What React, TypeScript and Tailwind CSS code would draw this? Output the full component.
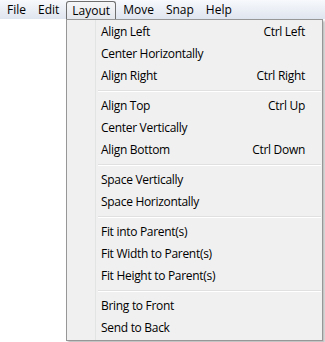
import React from "react";

type Item = { label: string; shortcut?: string };

const groups: Item[][] = [
  [
    { label: "Align Left", shortcut: "Ctrl Left" },
    { label: "Center Horizontally" },
    { label: "Align Right", shortcut: "Ctrl Right" },
  ],
  [
    { label: "Align Top", shortcut: "Ctrl Up" },
    { label: "Center Vertically" },
    { label: "Align Bottom", shortcut: "Ctrl Down" },
  ],
  [{ label: "Space Vertically" }, { label: "Space Horizontally" }],
  [
    { label: "Fit into Parent(s)" },
    { label: "Fit Width to Parent(s)" },
    { label: "Fit Height to Parent(s)" },
  ],
  [{ label: "Bring to Front" }, { label: "Send to Back" }],
];

const menus = ["File", "Edit", "Layout", "Move", "Snap", "Help"];

export default function App() {
  return (
    <div
      className="relative w-[325px] h-[342px] bg-white text-[12px] text-black"
      style={{ fontFamily: '"Open Sans", "Noto Sans", sans-serif' }}
    >
      {/* 메뉴 바 */}
      <div className="flex items-center h-[19px] pl-[1px] bg-gradient-to-b from-[#f7f9fc] to-[#dfe5ef]">
        {menus.map((m) =>
          m === "Layout" ? (
            <div
              key={m}
              className="h-[18px] mt-[1px] px-[5px] mx-[1px] flex items-center rounded-t-[3px] border border-b-0 border-[#6f6f6f] bg-gradient-to-b from-[#f5f6f7] to-[#e4e7ec]"
            >
              {m}
            </div>
          ) : (
            <div key={m} className="h-[19px] px-[6px] flex items-center">
              {m}
            </div>
          )
        )}
      </div>

      {/* 드롭다운 메뉴 */}
      <div className="absolute left-[66px] top-[19px] w-[257px] h-[322px] border border-[#979797] bg-[#f0f0f0] shadow-[2px_2px_2px_rgba(0,0,0,0.25)] pt-[1px] tracking-[-0.3px]">
        <div className="absolute left-[28px] top-0 bottom-0 w-[2px] border-l border-[#e2e3e3] bg-[#f0f0f0] border-r-white" />
        <div className="relative">
          {groups.map((g, gi) => (
            <div key={gi}>
              {gi > 0 && (
                <div className="h-[8px] flex items-center pl-[31px] pr-[1px]">
                  <div className="w-full h-[2px] border-t border-[#e0e0e0] border-b border-b-white" />
                </div>
              )}
              {g.map((it) => (
                <div
                  key={it.label}
                  className="h-[22px] flex items-center justify-between pl-[34px] pr-[17px]"
                >
                  <span>{it.label}</span>
                  {it.shortcut && <span>{it.shortcut}</span>}
                </div>
              ))}
            </div>
          ))}
        </div>
      </div>
    </div>
  );
}
